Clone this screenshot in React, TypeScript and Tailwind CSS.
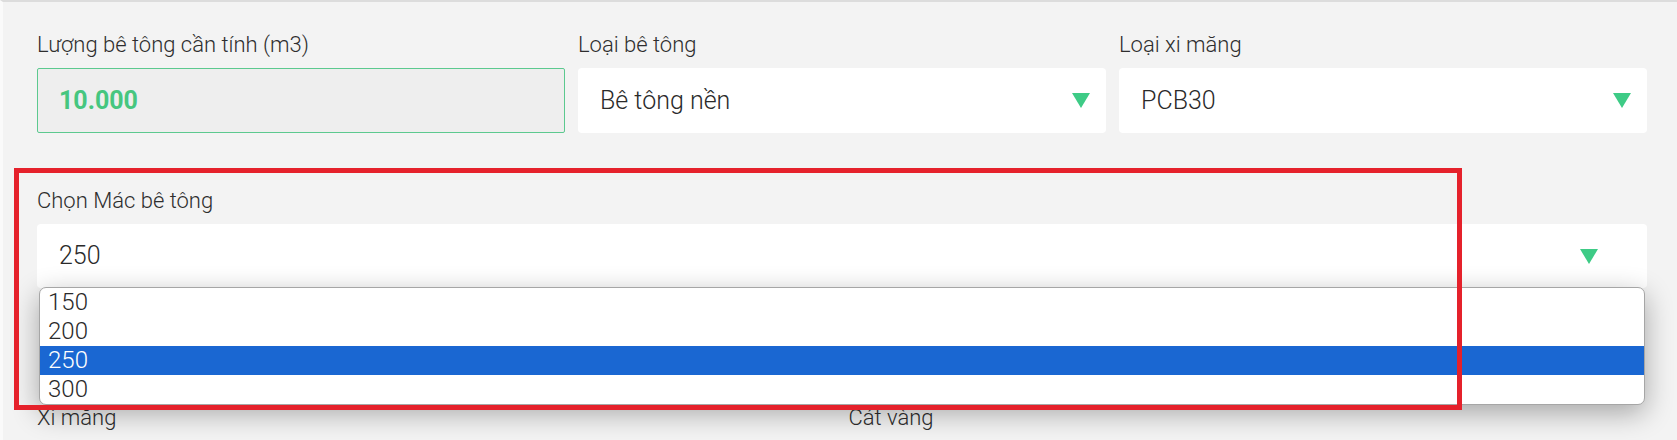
import React from "react";

const Arrow = () => (
    <svg width="18" height="15" viewBox="0 0 18 15" className="shrink-0">
        <polygon points="0,0 18,0 9,15" fill="#3ecb86" />
    </svg>
);

interface SelectBoxProps {
    value: string;
}

const SelectBox: React.FC<SelectBoxProps> = ({ value }) => (
    <div className="flex items-center justify-between h-[65px] bg-white rounded pl-[22px] pr-4">
        <span className="text-[25px] font-light text-[#2a2a2a]">{value}</span>
        <Arrow />
    </div>
);

const options = ["150", "200", "250", "300"];

export default function App() {
    const selected = "250";

    return (
        <div
            className="relative min-h-screen bg-[#f3f3f3] border-t-2 border-t-[#dcdcdc] border-l-[3px] border-l-[#fafafa] pl-[34px] pr-[30px] pt-[30px] overflow-hidden"
            style={{ fontFamily: "Roboto, 'Noto Sans', sans-serif" }}
        >
            {/* row 1 */}
            <div className="grid grid-cols-3 gap-x-[13px]">
                <div>
                    <label className="block text-[22px] leading-[26px] font-light text-[#2e2e2e] mb-[10px]">
                        Lượng bê tông cần tính (m3)
                    </label>
                    <div className="flex items-center h-[65px] bg-[#eeeeee] border border-[#5cc98f] rounded-[2px] pl-[21px]">
                        <span className="text-[25px] font-bold text-[#46c67f]">10.000</span>
                    </div>
                </div>
                <div>
                    <label className="block text-[22px] leading-[26px] font-light text-[#2e2e2e] mb-[10px]">Loại bê tông</label>
                    <SelectBox value="Bê tông nền" />
                </div>
                <div>
                    <label className="block text-[22px] leading-[26px] font-light text-[#2e2e2e] mb-[10px]">Loại xi măng</label>
                    <SelectBox value="PCB30" />
                </div>
            </div>

            {/* row 2 */}
            <div className="mt-[55px]">
                <label className="block text-[22px] leading-[26px] font-light text-[#2e2e2e] mb-[10px]">Chọn Mác bê tông</label>
                <div className="relative">
                    <div className="flex items-center justify-between h-[64px] bg-white rounded pl-[22px] pr-[49px]">
                        <span className="text-[25px] font-light text-[#2a2a2a]">{selected}</span>
                        <Arrow />
                    </div>
                    {/* open native list */}
                    <div className="absolute left-[2px] right-[2px] top-[-1px] translate-y-[64px] z-10 bg-white border border-[#a6a6a6] rounded-[7px] overflow-hidden shadow-[0_8px_28px_rgba(0,0,0,0.32)]">
                        {options.map((o) => (
                            <div
                                key={o}
                                className={`h-[29px] leading-[29px] pl-[8px] text-[24px] font-light ${
                                    o === selected ? "bg-[#1a67d2] text-white" : "text-[#2a2a2a]"
                                }`}
                            >
                                {o}
                            </div>
                        ))}
                    </div>
                </div>
            </div>

            {/* row 3, mostly under the list */}
            <div className="grid grid-cols-2 gap-x-[13px] mt-[117px]">
                <label className="block text-[22px] leading-[26px] font-light text-[#2e2e2e]">Xi măng</label>
                <label className="block text-[22px] leading-[26px] font-light text-[#2e2e2e]">Cát vàng</label>
            </div>

            {/* annotation */}
            <div className="absolute left-[11px] top-[166px] w-[1448px] h-[242px] border-[5px] border-[#e5212b] z-20 pointer-events-none" />
        </div>
    );
}
